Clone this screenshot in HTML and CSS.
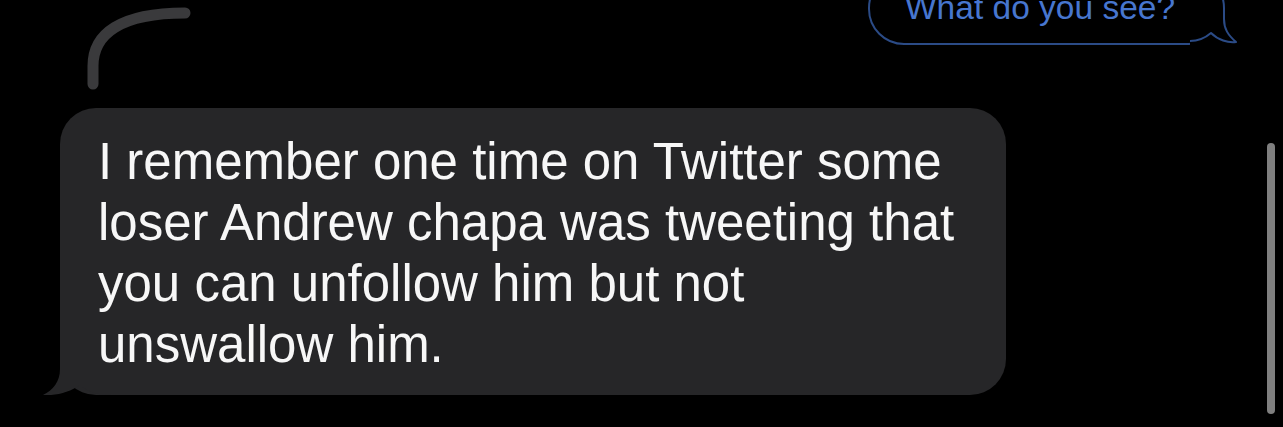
FILE: index.html
```html
<!DOCTYPE html>
<html>
<head>
<meta charset="utf-8">
<link rel="stylesheet" href="styles.css">
</head>
<body>
<div class="screen">
  <div class="top-row">
    <svg class="thread-arc" width="120" height="100" viewBox="0 0 120 100">
      <path d="M13 84 L13 66 C13 34 40 13 105 13" fill="none" stroke="#3a3a3c" stroke-width="11" stroke-linecap="round"/>
    </svg>
    <div class="out-bubble">
      <span class="out-text">What do you see?</span>
      <svg class="out-tail" width="48" height="36" viewBox="0 0 48 36">
        <path d="M0 0 L34 0 L34 8 C34 18 38 26 46 33 L46 36 L0 36 Z" fill="#000"/>
        <path d="M34 0 L34 10 C34 20 38 26 46 33 C38 34 28 31 21 24 C14 30 8 32 0 32" fill="none" stroke="#2b4b86" stroke-width="2" stroke-linejoin="round"/>
      </svg>
    </div>
  </div>
  <div class="main-row">
    <div class="in-bubble">
      <svg class="in-tail" width="70" height="40" viewBox="0 0 70 40">
        <path d="M18 0 L18 14 C18 27 11 35 1 40 C14 41 28 37 38 30 C46 37 56 40 70 40 L70 0 Z" fill="#262628"/>
      </svg>
      <p class="in-text">I remember one time on Twitter some<br>loser Andrew chapa was tweeting that<br>you can unfollow him but not<br>unswallow him.</p>
    </div>
    <div class="scrollbar"></div>
  </div>
</div>
</body>
</html>
```
FILE: styles.css
```css
html, body {
  margin: 0;
  padding: 0;
  background: #000;
}
body {
  width: 1283px;
  height: 427px;
  overflow: hidden;
  font-family: "Liberation Sans", Arial, sans-serif;
}
.screen {
  width: 1283px;
  height: 427px;
  display: flex;
  flex-direction: column;
}
.top-row {
  height: 108px;
  display: flex;
  justify-content: space-between;
  align-items: flex-start;
}
.thread-arc {
  display: block;
  margin-left: 80px;
}
.out-bubble {
  position: relative;
  box-sizing: border-box;
  width: 357px;
  margin-top: -28px;
  margin-right: 58px;
  padding: 14px 20px 15px 35px;
  border: 2px solid #2b4b86;
  border-radius: 36px;
}
.out-text {
  display: block;
  color: #4776cf;
  font-size: 33.5px;
  line-height: 40px;
  white-space: nowrap;
}
.out-tail {
  position: absolute;
  right: -15px;
  bottom: -2px;
  display: block;
}
.main-row {
  display: flex;
  align-items: flex-start;
}
.in-bubble {
  position: relative;
  box-sizing: border-box;
  width: 946px;
  height: 287px;
  margin-left: 60px;
  padding: 23px 20px 20px 38px;
  background: #262628;
  border-radius: 36px;
}
.in-text {
  position: relative;
  z-index: 1;
  margin: 0;
  color: #f7f7f7;
  font-size: 51px;
  line-height: 61px;
  white-space: nowrap;
}
.in-tail {
  position: absolute;
  left: -18px;
  bottom: 0;
  display: block;
}
.scrollbar {
  width: 8px;
  height: 271px;
  margin-top: 35px;
  margin-left: auto;
  margin-right: 8px;
  background: #7f7f7f;
  border-radius: 4px;
}
```
